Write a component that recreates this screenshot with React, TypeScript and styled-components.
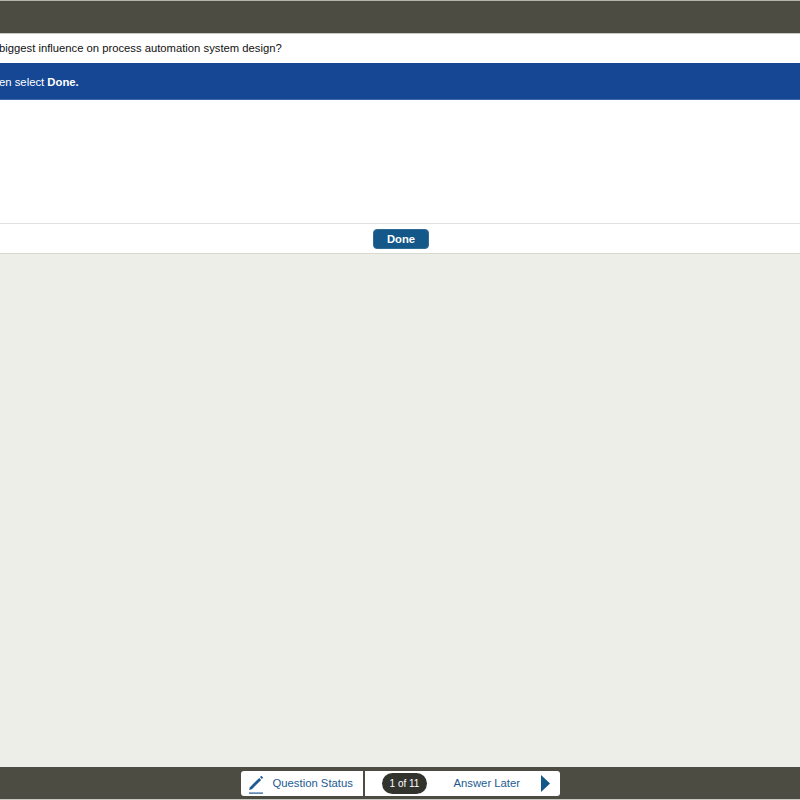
import { createGlobalStyle, styled } from "styled-components";

const GlobalStyle = createGlobalStyle`
  html, body {
    margin: 0;
    padding: 0;
    height: 100%;
    overflow: hidden;
  }
  body {
    font-family: "Liberation Sans", Arial, sans-serif;
    background: #eeeee9;
  }
`;

const Page = styled.div`
  display: flex;
  flex-direction: column;
  width: 800px;
  height: 800px;
  overflow: hidden;
  background: #eeeee9;
`;

const TopBar = styled.div`
  height: 32px;
  flex: none;
  background: #4c4c43;
  border-top: 1px solid #b5b5ae;
  border-bottom: 1px solid #c9c9c4;
`;

const Question = styled.div`
  height: 29px;
  flex: none;
  background: #fff;
  color: #111;
  font-size: 11.25px;
  line-height: 29px;
  white-space: nowrap;
  text-indent: -1px;
`;

const Instruction = styled.div`
  height: 36px;
  flex: none;
  background: #164794;
  border-bottom: 1px solid #3e68a8;
  color: #fff;
  font-size: 11.3px;
  line-height: 38px;
  white-space: nowrap;
  text-indent: -1px;

  strong {
    font-weight: 700;
  }
`;

const AnswerArea = styled.div`
  height: 123px;
  flex: none;
  background: #fff;
`;

const ActionRow = styled.div`
  height: 29px;
  flex: none;
  display: flex;
  align-items: center;
  justify-content: center;
  background: #fff;
  border-top: 1px solid #e0e0dc;
  border-bottom: 1px solid #d8d8d3;
`;

const DoneButton = styled.button`
  width: 56px;
  height: 20px;
  margin: 1px 0 0 2px;
  padding: 0;
  border: 1px solid #2f6c97;
  border-radius: 4px;
  background: #14588a;
  color: #fff;
  font-family: "Liberation Sans", Arial, sans-serif;
  font-size: 11.25px;
  font-weight: 700;
`;

const Spacer = styled.div`
  flex: 1;
`;

const Footer = styled.div`
  height: 32px;
  flex: none;
  display: flex;
  align-items: flex-start;
  justify-content: center;
  background: #4c4c43;
  border-bottom: 1px solid #c9c9c4;
`;

const NavGroup = styled.div`
  display: flex;
  height: 25px;
  gap: 2px;
  margin-top: 4px;
`;

const NavSegment = styled.div<{ $side: "left" | "right" }>`
  display: flex;
  align-items: center;
  box-sizing: border-box;
  height: 100%;
  background: #fff;
  color: #1d5b92;
  font-size: 11.3px;
  border-radius: ${(p) => (p.$side === "left" ? "3px 0 0 3px" : "0 3px 3px 0")};
  width: ${(p) => (p.$side === "left" ? "122px" : "195px")};
  padding-left: ${(p) => (p.$side === "left" ? "7px" : "17px")};
`;

const StatusLabel = styled.span`
  margin: 0 0 2px 9px;
`;

const Counter = styled.span`
  display: inline-flex;
  align-items: center;
  justify-content: center;
  box-sizing: border-box;
  width: 45px;
  height: 21px;
  padding-left: 1px;
  border-radius: 10.5px;
  background: #33332e;
  color: #fff;
  font-size: 10px;
`;

const LaterLabel = styled.span`
  margin: 0 0 2px 27px;
`;

const Arrow = styled.svg`
  margin-left: 21px;
`;

export default function App() {
  return (
    <Page>
      <GlobalStyle />
      <TopBar />
      <Question>biggest influence on process automation system design?</Question>
      <Instruction>
        en select <strong>Done.</strong>
      </Instruction>
      <AnswerArea />
      <ActionRow>
        <DoneButton>Done</DoneButton>
      </ActionRow>
      <Spacer />
      <Footer>
        <NavGroup>
          <NavSegment $side="left">
            <svg width="16" height="21" viewBox="0 0 16 21">
              <path d="M1.9 14.2 L11.2 4.9 L13.2 6.9 L3.9 16.2 L1.1 17 Z" fill="#1d5b92" />
              <path d="M12 4.1 L13.3 2.8 L15.2 4.7 L13.9 6 Z" fill="#1d5b92" />
              <rect x="1" y="19.5" width="14" height="1.2" fill="#1d5b92" />
            </svg>
            <StatusLabel>Question Status</StatusLabel>
          </NavSegment>
          <NavSegment $side="right">
            <Counter>1 of 11</Counter>
            <LaterLabel>Answer Later</LaterLabel>
            <Arrow width="9" height="17" viewBox="0 0 9 17">
              <path d="M0 0 L9 8.5 L0 17 Z" fill="#14588a" />
            </Arrow>
          </NavSegment>
        </NavGroup>
      </Footer>
    </Page>
  );
}
